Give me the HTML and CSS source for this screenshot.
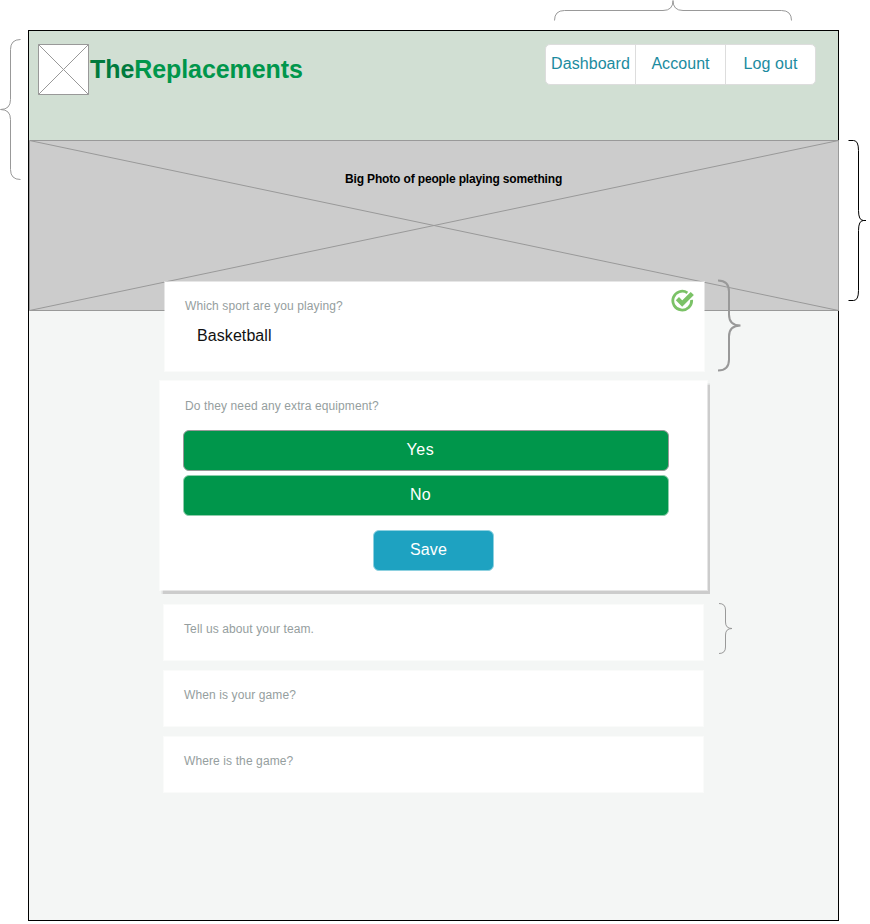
FILE: index.html
```html
<!DOCTYPE html>
<html lang="en">
<head>
<meta charset="utf-8">
<title>The Replacements</title>
<link rel="stylesheet" href="styles.css">
</head>
<body>
<div class="page">
  <header class="header">
    <div class="brand">
      <svg class="logo" width="51" height="51" viewBox="0 0 51 51"><path d="M.5 .5H50.5V50.5H.5ZL50.5 50.5M50.5 .5L.5 50.5" fill="#fff" stroke="#999"/></svg>
      <h1 class="name"><span class="name-the">The</span>Replacements</h1>
    </div>
    <nav class="nav">
      <a class="nav-item">Dashboard</a>
      <a class="nav-item">Account</a>
      <a class="nav-item">Log out</a>
    </nav>
  </header>
  <section class="photo">
    <svg class="photo-cross" width="810" height="171" viewBox="0 0 810 171"><path d="M.5 .5H809.5V170.5H.5ZL809.5 170.5M809.5 .5L.5 170.5" fill="#ccc" stroke="#999"/></svg>
    <p class="photo-title">Big Photo of people playing something</p>
  </section>
  <main class="form">
    <section class="card answered">
      <div>
        <p class="question">Which sport are you playing?</p>
        <p class="answer">Basketball</p>
      </div>
      <svg class="check" width="24" height="24" viewBox="0 0 24 24"><path d="M16.4 3.8A9.4 9.4 0 1 0 20.6 10.9" fill="none" stroke="#7bc267" stroke-width="2.8"/><path d="M6.4 9.7L11.2 14.5L21.3 4.5" fill="none" stroke="#7bc267" stroke-width="4.5"/></svg>
    </section>
    <section class="card active">
      <p class="question q-equipment">Do they need any extra equipment?</p>
      <button class="button yes"><span>Yes</span></button>
      <button class="button no"><span>No</span></button>
      <button class="button save"><span>Save</span></button>
    </section>
    <section class="card pending"><p class="question">Tell us about your team.</p></section>
    <section class="card pending"><p class="question">When is your game?</p></section>
    <section class="card pending"><p class="question">Where is the game?</p></section>
  </main>
</div>
<svg class="braces" width="870" height="924" viewBox="0 0 870 924" fill="none" stroke="#999">
  <path d="M554.5 20.5Q554.5 10.5 564.5 10.5H663Q673 10.5 673 .5Q673 10.5 683 10.5H781.5Q791.5 10.5 791.5 20.5"/>
  <path d="M20.5 39.5Q10.5 39.5 10.5 49.5V99.5Q10.5 109.5 .5 109.5Q10.5 109.5 10.5 119.5V169.5Q10.5 179.5 20.5 179.5"/>
  <path d="M848.5 140.5H853.5Q858.5 140.5 858.5 150.5V210.5Q858.5 220.5 863.5 220.5H866H863.5Q858.5 220.5 858.5 230.5V290.5Q858.5 300.5 853.5 300.5H848.5" stroke="#000"/>
  <path d="M718 280.5Q729 280.5 729 291.5V314.5Q729 325.5 740.5 325.5Q729 325.5 729 336.5V359.5Q729 370.5 718 370.5" stroke-width="2"/>
  <path d="M719 603.5Q725.5 603.5 725.5 610V622Q725.5 628.5 732 628.5Q725.5 628.5 725.5 635V647Q725.5 653.5 719 653.5"/>
</svg>
</body>
</html>
```
FILE: styles.css
```css
* { box-sizing: border-box; }
body {
  margin: 0;
  background: #fff;
  font-family: "Liberation Sans", Arial, sans-serif;
  height: 924px;
  overflow: hidden;
}
h1, p { margin: 0; }
.page {
  width: 811px;
  height: 891px;
  margin: 30px 0 0 28px;
  border: 1px solid #000;
  background: #f4f6f5;
}
.header {
  height: 109px;
  padding: 13px 22px 0 9px;
  display: flex;
  justify-content: space-between;
  align-items: flex-start;
  background: #d1dfd3;
}
.brand { display: flex; gap: 1px; }
.name {
  font-size: 25px;
  line-height: 29px;
  margin-top: 11px;
  color: #00964b;
  letter-spacing: -0.08px;
  white-space: nowrap;
}
.name-the { color: #007a3d; }
.nav {
  display: flex;
  width: 271px;
  height: 41px;
  border: 1px solid #ddd;
  border-radius: 5px;
  background: #fff;
}
.nav-item {
  flex: 1;
  padding-top: 9px;
  text-align: center;
  font-size: 16px;
  line-height: 20px;
  letter-spacing: 0.06px;
  color: #1b8ba0;
}
.nav-item + .nav-item { border-left: 1px solid #ddd; }
.photo {
  display: grid;
  width: 810px;
  height: 171px;
}
.photo-cross, .photo-title { grid-area: 1 / 1; }
.photo, .form { position: relative; }
.photo-title {
  margin: 31px 0 0 316px;
  font-size: 12px;
  line-height: 16px;
  font-weight: bold;
  letter-spacing: -0.15px;
  color: #000;
  white-space: nowrap;
}
.form {
  margin-top: -30px;
  padding-left: 130px;
}
.card {
  border: 1px solid rgba(255, 255, 255, .5);
  background: #fff;
  background-clip: padding-box;
}
.question {
  font-size: 12px;
  line-height: 16px;
  letter-spacing: 0.11px;
  color: #959e9e;
}
.answered {
  display: flex;
  justify-content: space-between;
  width: 541px;
  height: 91px;
  margin-left: 5px;
  padding: 16px 9px 0 20px;
}
.answer {
  margin: 12px 0 0 12px;
  font-size: 16px;
  line-height: 20px;
  letter-spacing: 0.08px;
  color: #111;
}
.check { margin-top: -9px; }
.active {
  display: flex;
  flex-direction: column;
  width: 549px;
  height: 211px;
  margin-top: 8px;
  padding: 17px 0 0 23px;
  box-shadow: 1.5px 2.5px 1px #ccc;
}
.q-equipment { margin-left: 2px; }
.button {
  height: 41px;
  width: 486px;
  padding: 0 0 2px;
  border: 1px solid #8fcdac;
  border-radius: 6px;
  background: #00964b;
  color: #fff;
  font: 16px/20px "Liberation Sans", Arial, sans-serif;
}
.button span { display: block; letter-spacing: 0.15px; }
.yes { margin-top: 16px; border-color: #999; }
.yes span { letter-spacing: 0.6px; }
.no { margin-top: 4px; }
.yes span, .no span { margin-left: -11px; }
.save {
  width: 121px;
  margin: 14px 0 0 190px;
  border-color: #8ed1e0;
  background: #1ea2c1;
}
.save span { margin-left: -10px; }
.pending {
  width: 541px;
  height: 57px;
  margin: 9px 0 0 4px;
  padding: 16px 0 0 20px;
}
.active + .pending { margin-top: 13px; }
.braces { position: absolute; left: 0; top: 0; }
```
